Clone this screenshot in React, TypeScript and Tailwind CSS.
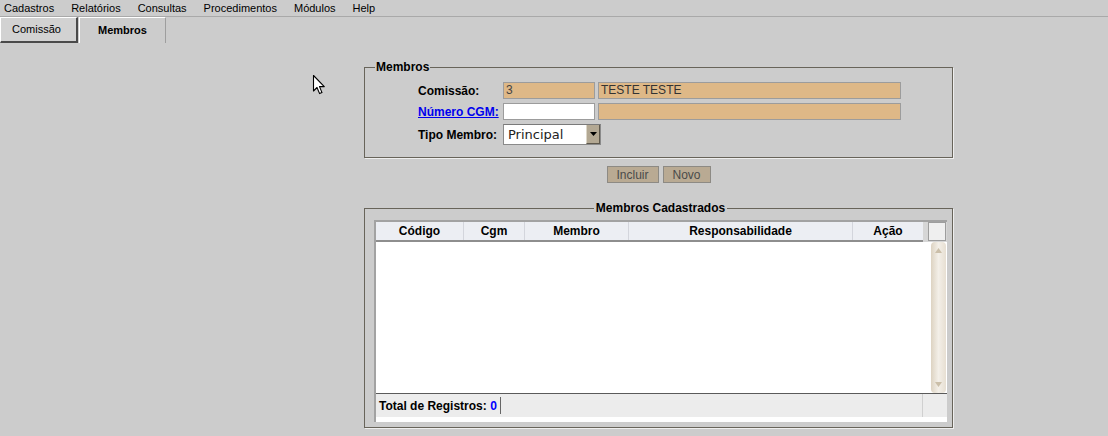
import React from "react";

const menuItems = ["Cadastros", "Relatórios", "Consultas", "Procedimentos", "Módulos", "Help"];

const columns = [
  { name: "Código", w: "w-[88px]" },
  { name: "Cgm", w: "w-[61px]" },
  { name: "Membro", w: "w-[104px]" },
  { name: "Responsabilidade", w: "w-[224px]" },
  { name: "Ação", w: "w-[70px]" },
];

const Cursor = () => (
  <svg className="absolute left-[312px] top-[74px]" width="14" height="22" viewBox="0 0 14 22">
    <path
      d="M1.5 1.5 L1.5 17 L5 13.5 L7.6 19.6 L10 18.6 L7.5 12.6 L12.3 12.6 Z"
      fill="#ffffff"
      stroke="#000000"
      strokeWidth="1.1"
      strokeLinejoin="round"
    />
  </svg>
);

const App = () => {
  return (
    <div className="relative w-[1108px] h-[436px] overflow-hidden bg-[#cccccc] font-['Liberation_Sans',Arial,sans-serif] text-black">
      {/* Menu */}
      <div className="flex h-[17px] items-center gap-[17px] pl-[4px] border-b border-[#a9a9a9] text-[11px] leading-none">
        {menuItems.map((m) => (
          <span key={m}>{m}</span>
        ))}
      </div>

      {/* Tabs */}
      <div className="flex h-[26px] text-[11px]">
        <div className="flex w-[78px] items-center pl-[11px] border-t border-l border-white border-r-2 border-b-2 border-r-[#4a4a4a] border-b-[#4a4a4a] bg-[#d2d2d2]">
          Comissão
        </div>
        <div className="flex w-[87px] items-center justify-center ml-[1px] border-l border-t border-white border-r border-r-[#9e9e9e] font-bold">
          Membros
        </div>
      </div>

      <Cursor />

      <div className="ml-[364px] w-[589px] mt-[17px]">
        {/* Fieldset Membros */}
        <fieldset className="border border-[#68645a] shadow-[1px_1px_0_#eeeeee] pb-[12px]">
          <legend className="ml-[10px] px-[1px] text-[12px] font-bold leading-[14px]">Membros</legend>
          <div className="pt-[8px] pl-[53px] flex flex-col gap-[4px] text-[12px]">
            <div className="flex items-center h-[17px]">
              <span className="w-[85px] font-bold">Comissão:</span>
              <div className="w-[92px] h-[17px] bg-[#deb887] border border-[#9c9c9c] px-[2px] text-[#444] leading-[15px]">3</div>
              <div className="ml-[3px] w-[303px] h-[17px] bg-[#deb887] border border-[#9c9c9c] px-[2px] text-[#333] leading-[15px]">
                TESTE TESTE
              </div>
            </div>
            <div className="flex items-center h-[17px]">
              <span className="w-[85px] font-bold text-[#0000ee] underline">Número CGM:</span>
              <div className="w-[92px] h-[17px] bg-white border border-[#9c9c9c]" />
              <div className="ml-[3px] w-[303px] h-[17px] bg-[#deb887] border border-[#9c9c9c]" />
            </div>
            <div className="flex items-center h-[21px]">
              <span className="w-[85px] font-bold">Tipo Membro:</span>
              <div className="flex w-[98px] h-[21px] bg-white border border-[#8a8a8a] border-t-[#7a7a7a]">
                <span className="flex-1 pl-[4px] font-['DejaVu_Sans',sans-serif] text-[13px] leading-[19px] text-[#222]">
                  Principal
                </span>
                <div className="flex w-[14px] items-center justify-center bg-[#b3a893] border-l border-[#dcd6c8] border-r border-r-[#5e584c] border-b border-b-[#5e584c]">
                  <svg width="7" height="4" viewBox="0 0 7 4">
                    <path d="M0 0 L7 0 L3.5 4 Z" fill="#000" />
                  </svg>
                </div>
              </div>
            </div>
          </div>
        </fieldset>

        {/* Buttons */}
        <div className="flex justify-center gap-[4px] mt-[8px] text-[12px]">
          <button className="w-[52px] h-[17px] bg-[#b9aa93] border border-[#8d8a84] text-[#4a4a4a] leading-none">
            Incluir
          </button>
          <button className="w-[48px] h-[17px] bg-[#b9aa93] border border-[#8d8a84] text-[#4a4a4a] leading-none">
            Novo
          </button>
        </div>

        {/* Fieldset Membros Cadastrados */}
        <fieldset className="mt-[18px] border border-[#68645a] shadow-[1px_1px_0_#eeeeee] pl-[9px] pr-[5px] pb-[5px]">
          <legend className="mx-auto px-[2px] text-[12px] font-bold leading-[14px]">Membros Cadastrados</legend>
          <div className="mt-[5px] w-[573px] border-l-2 border-t-2 border-[#a2a2a2] bg-white text-[12px]">
            {/* Header */}
            <div className="flex h-[20px] bg-[#d6d6d6]">
              <div className="flex w-[547px] h-[18px] bg-[#eceef3] border-b-2 border-[#8e8e8e] box-content">
                {columns.map((c, i) => (
                  <div
                    key={c.name}
                    className={`${c.w} flex items-center justify-center font-bold ${i < columns.length - 1 ? "border-r border-[#d3d5dc]" : ""}`}
                  >
                    {c.name}
                  </div>
                ))}
              </div>
              <div className="ml-[5px] w-[18px] h-[19px] bg-[#efefef] border border-[#9d9d9d]" />
            </div>
            {/* Body */}
            <div className="flex h-[151px] justify-end pr-[1px]">
              <div className="flex w-[15px] flex-col items-center justify-between py-[6px] rounded-[4px] bg-gradient-to-r from-[#ddd3c2] via-[#f3efe8] to-[#e7dfd2]">
                <svg width="7" height="5" viewBox="0 0 7 5">
                  <path d="M3.5 0 L7 5 L0 5 Z" fill="#cbbfa9" />
                </svg>
                <svg width="7" height="5" viewBox="0 0 7 5">
                  <path d="M0 0 L7 0 L3.5 5 Z" fill="#cbbfa9" />
                </svg>
              </div>
            </div>
            {/* Footer */}
            <div className="flex h-[24px] border-t border-[#5a5a5a]">
              <div className="flex w-[547px] items-center bg-[#ececec] border-r border-[#d0d0d0]">
                <div className="flex h-[17px] items-center pl-[3px] pr-[3px] border-r border-[#666] font-bold">
                  Total de Registros:&nbsp;<span className="text-[#0000ff]">0</span>
                </div>
              </div>
              <div className="flex-1 bg-[#ececec]" />
            </div>
            <div className="h-[5px] bg-white" />
          </div>
        </fieldset>
      </div>
    </div>
  );
};

export default App;
